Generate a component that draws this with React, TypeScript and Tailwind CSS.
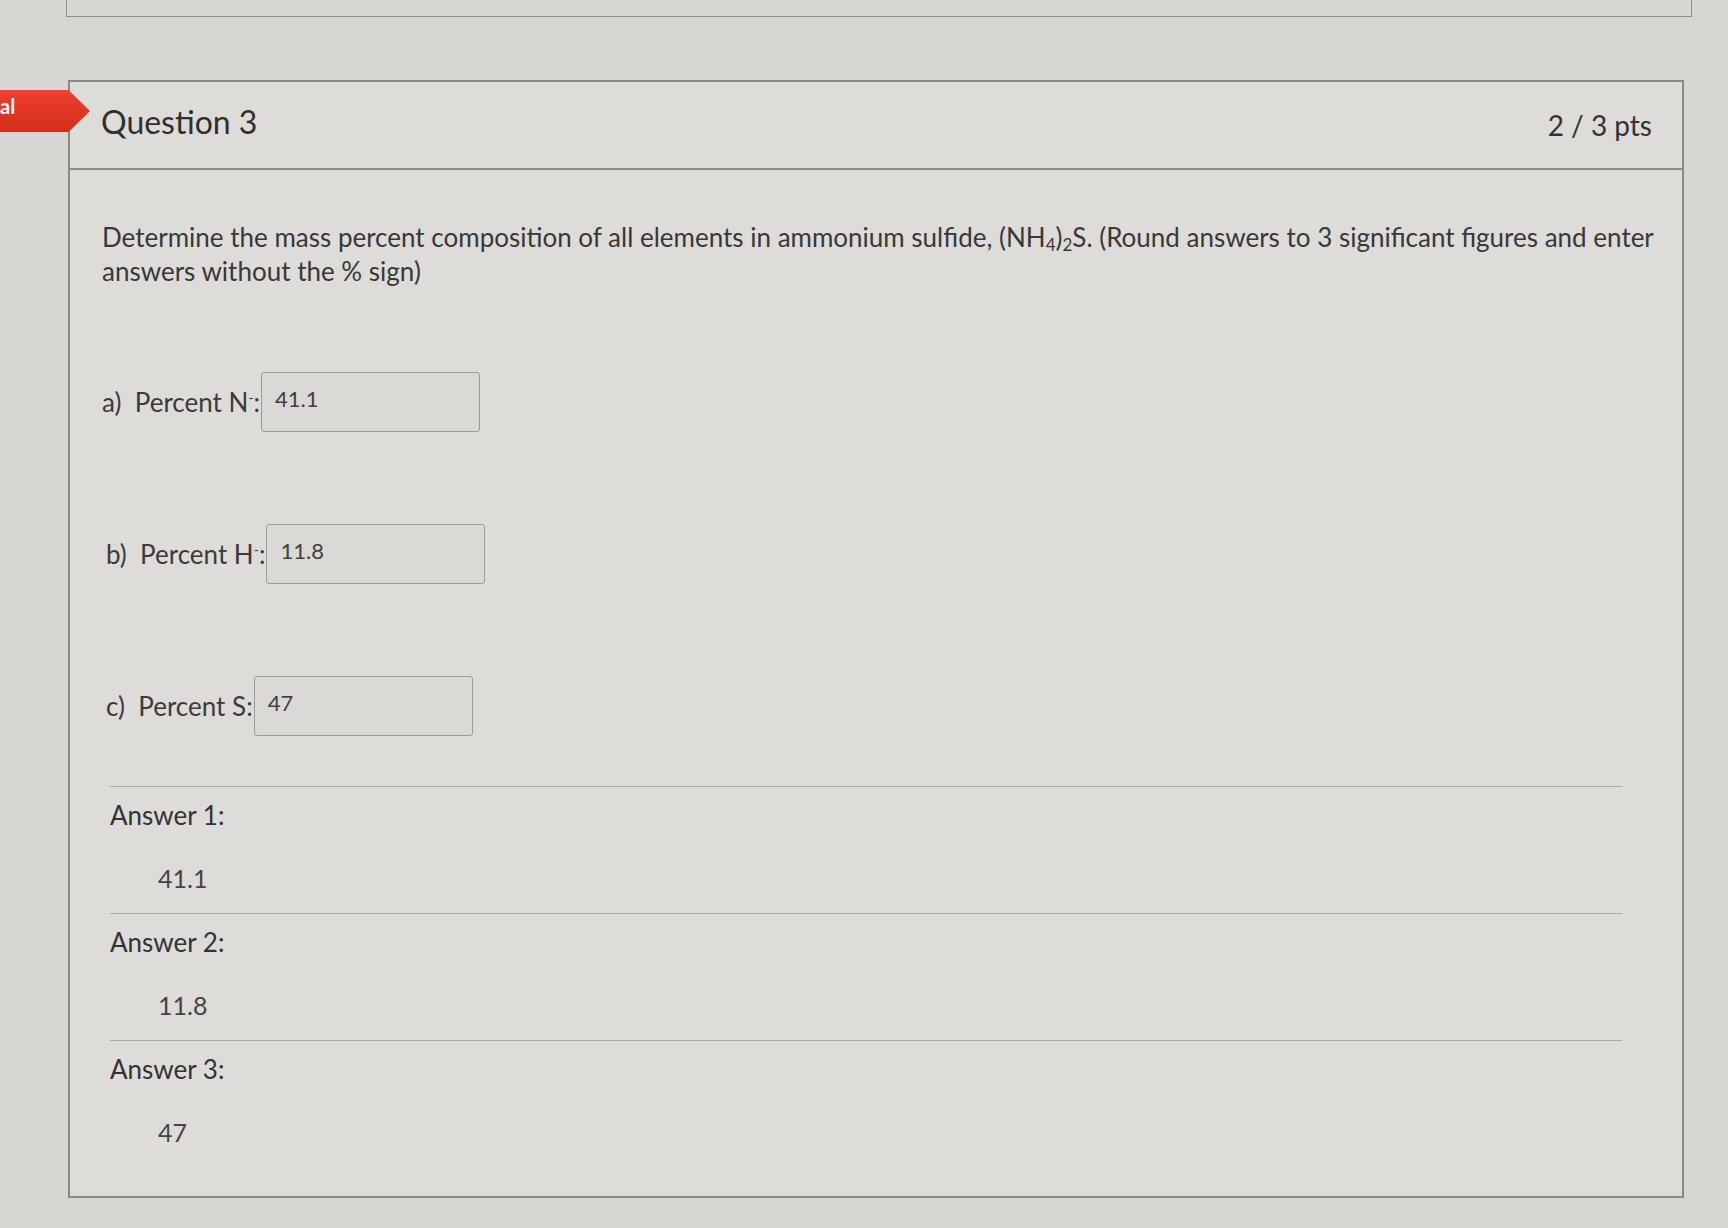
import React from "react";

const font = "font-['Lato','Open_Sans',sans-serif]";

function InputRow({ prefix, el, minus, value }: { prefix: string; el: string; minus: boolean; value: string }) {
  return (
    <div className="flex items-center h-[60px]">
      <span className="text-[26px] text-[#3b3b3b] whitespace-nowrap">
        {prefix}&nbsp; Percent {el}
        {minus ? <span className="relative -top-[9px] text-[14px]">-</span> : null}:
      </span>
      <div className="ml-[1px] w-[219px] h-[60px] border border-[#9b9b9a] rounded-[3px] bg-[#dad9d6] flex items-start pl-[13px] pt-[12px]">
        <span className="text-[22px] text-[#404040] leading-[28px]">{value}</span>
      </div>
    </div>
  );
}

function AnswerBlock({ n, value, last }: { n: number; value: string; last?: boolean }) {
  return (
    <div className={`border-t border-[#a9a8a6] pt-[12px] ${last ? "pb-[48px]" : "pb-[19px]"}`}>
      <div className="h-[32px] leading-[32px] text-[26px] text-[#333]">Answer {n}:</div>
      <div className="mt-[31px] h-[32px] leading-[32px] text-[25px] text-[#444] pl-[48px]">{value}</div>
    </div>
  );
}

export default function App() {
  return (
    <div className={`relative w-[1728px] h-[1228px] overflow-hidden bg-[#d8d6d3] ${font}`}>
      {/* top box remnant */}
      <div className="ml-[66px] w-[1626px] h-[17px] border-x border-b border-[#8e8d8b]" />

      {/* red badge */}
      <div className="absolute left-0 top-[90px] w-[90px] h-[42px] bg-gradient-to-b from-[#ef412d] to-[#d52c1c] [clip-path:polygon(0_0,76%_0,100%_50%,76%_100%,0_100%)] shadow">
        <span className="absolute left-0 top-[4px] text-[20px] font-bold text-white leading-[24px]">al</span>
      </div>

      {/* question card */}
      <div className="mt-[63px] ml-[68px] w-[1616px] border-2 border-[#8a8987] bg-[#dddcd9]">
        <div className="h-[88px] flex items-center justify-between pl-[31px] pr-[30px] border-b-2 border-[#8e8d8b]">
          <span className="text-[32px] text-[#2f2f2f] mt-[-6px]">Question 3</span>
          <span className="text-[28px] text-[#333]">2 / 3 pts</span>
        </div>

        <div className="pl-[32px] pt-[50px]">
          <div className="text-[26px] leading-[34px] text-[#383838]">
            <div className="whitespace-nowrap">
              Determine the mass percent composition of all elements in ammonium sulfide, (NH
              <sub className="text-[17px]">4</sub>)<sub className="text-[17px]">2</sub>S. (Round answers to 3 significant figures and enter
            </div>
            <div className="whitespace-nowrap">answers without the % sign)</div>
          </div>

          <div className="mt-[84px] flex flex-col gap-[92px]">
            <InputRow prefix="a)" el="N" minus value="41.1" />
            <div className="pl-[4px]">
              <InputRow prefix="b)" el="H" minus value="11.8" />
            </div>
            <div className="pl-[4px]">
              <InputRow prefix="c)" el="S" minus={false} value="47" />
            </div>
          </div>

          <div className="mt-[50px] ml-[8px] mr-[60px]">
            <AnswerBlock n={1} value="41.1" />
            <AnswerBlock n={2} value="11.8" />
            <AnswerBlock n={3} value="47" last />
          </div>
        </div>
      </div>
    </div>
  );
}
